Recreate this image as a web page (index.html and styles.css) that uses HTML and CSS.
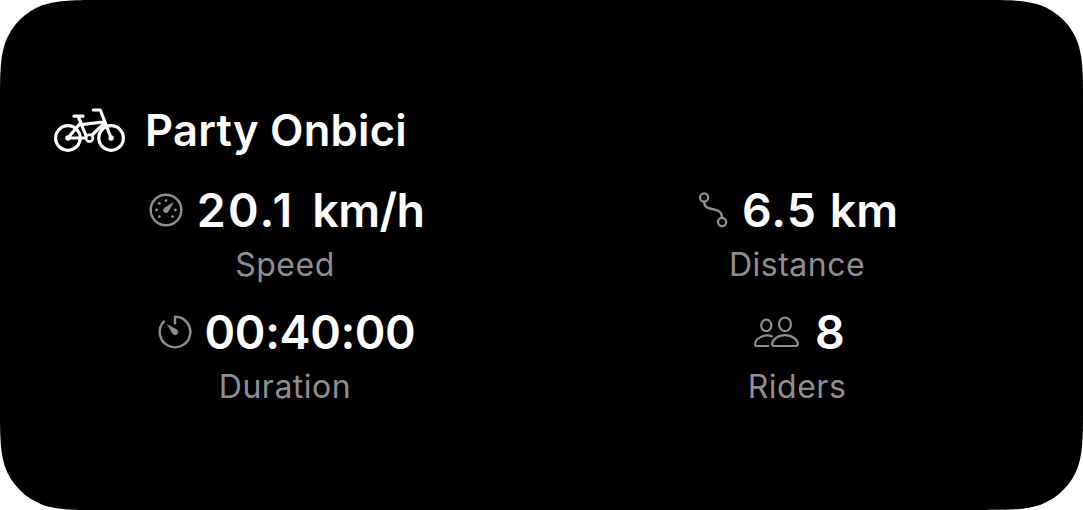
FILE: index.html
```html
<!DOCTYPE html>
<html lang="en">
<head>
  <meta charset="UTF-8" />
  <meta name="viewport" content="width=device-width, initial-scale=1" />
  <title>Party Onbici</title>
  <link rel="stylesheet" href="styles.css">
</head>
<body>

  <main class="activity-card">
    <header class="card-header">
      <svg class="bike-icon" width="74" height="52" viewBox="0 0 74 52" aria-hidden="true">
        <g fill="none" stroke="#fff" stroke-width="3.2" stroke-linecap="round" stroke-linejoin="round">
          <circle cx="14.9" cy="34" r="12.3" />
          <circle cx="58.1" cy="34" r="12.3" />
          <path d="M14.9 34H34L27.5 18.500M21 12.200H30M25.200 12.700l2.600 6L14.900 34M28.300 20.700L50 18M37 33L51.500 19M40.300 6H47.300L58.100 34" />
        </g>
        <circle cx="14.9" cy="34" r="2.7" fill="#fff" />
        <circle cx="58.1" cy="34" r="2.7" fill="#fff" />
        <circle cx="36.5" cy="34.2" r="3.4" fill="#000" stroke="#fff" stroke-width="2.6" />
      </svg>
      <h1 class="title">Party Onbici</h1>
    </header>

    <section class="stats">
      <div class="stat">
        <div class="value speed">
          <svg width="34" height="34" viewBox="0 0 34 34" aria-hidden="true">
            <circle cx="17" cy="17" r="15.3" fill="none" stroke="#8e8e93" stroke-width="2.4" />
            <path d="M24.8 9.1L19.5 18.6A2.9 2.9 0 1 1 15.4 14.7Z" fill="#8e8e93" />
            <g fill="#8e8e93">
              <circle cx="17" cy="7.7" r="1.4" />
              <circle cx="10.3" cy="10.5" r="1.4" />
              <circle cx="7.6" cy="17" r="1.4" />
              <circle cx="10.3" cy="23.7" r="1.4" />
              <circle cx="23.5" cy="23.7" r="1.4" />
              <circle cx="26.4" cy="17" r="1.4" />
            </g>
          </svg>
          <span><span class="number">20.1</span> <span class="unit">km/h</span></span>
        </div>
        <div class="label">Speed</div>
      </div>

      <div class="stat">
        <div class="value distance">
          <svg width="30" height="36" viewBox="0 0 30 36" aria-hidden="true">
            <g fill="none" stroke="#8e8e93" stroke-width="2.3">
              <circle cx="5.1" cy="5.5" r="4.1" />
              <circle cx="23.1" cy="30" r="4.1" />
              <path d="M5.1 9.8C5 15 8.5 16.1 13.2 17C19 18.1 23.1 19.4 23.1 25.7" />
            </g>
          </svg>
          <span><span class="number">6.5</span> <span class="unit">km</span></span>
        </div>
        <div class="label">Distance</div>
      </div>

      <div class="stat">
        <div class="value duration">
          <svg width="34" height="34" viewBox="0 0 34 34" aria-hidden="true">
            <path d="M17 8.4V1.7A15.3 15.3 0 1 1 5.8 6.6" fill="none" stroke="#8e8e93" stroke-width="2.4" stroke-linecap="round" stroke-linejoin="round" />
            <path d="M9.4 9.5L18.8 14.8A2.8 2.8 0 1 1 14.9 18.8Z" fill="#8e8e93" stroke="#8e8e93" stroke-width=".6" stroke-linejoin="round" />
          </svg>
          <span>00:40:00</span>
        </div>
        <div class="label">Duration</div>
      </div>

      <div class="stat">
        <div class="value riders">
          <svg width="46" height="32" viewBox="0 0 46 32" aria-hidden="true">
            <g fill="none" stroke="#8e8e93" stroke-width="2.2" stroke-linecap="round" stroke-linejoin="round">
              <ellipse cx="12.3" cy="9.4" rx="5.1" ry="5.7" />
              <ellipse cx="31" cy="8.3" rx="6" ry="6.8" />
              <path d="M31 19.2C23.5 19.2 18.1 24.3 18.1 28Q18.1 30 20.3 30H41.7Q43.9 30 43.9 28C43.9 24.3 38.5 19.2 31 19.2Z" />
              <path d="M17.8 20.3C10 17.3 1.1 22.8 1.1 28.3Q1.1 30 3 30H14.3" />
            </g>
          </svg>
          <span>8</span>
        </div>
        <div class="label">Riders</div>
      </div>
    </section>
  </main>

</body>
</html>
```

FILE: styles.css
```css
body {
  margin: 0;
  background: #fff;
  font-family: Inter, "Liberation Sans", sans-serif;
}
.activity-card {
  box-sizing: border-box;
  width: 1083px;
  height: 510px;
  padding: 100px 30px 0 29px;
  background: #000;
  color: #fff;
  /* continuous corners, a bit softer than border-radius */
  clip-path: path("M104 0H979C1009 0 1024 0 1040.1 5.1C1057.6 11.5 1071.5 25.4 1077.9 42.9C1083 59 1083 74 1083 104V406C1083 436 1083 451 1077.900 467.100C1071.500 484.600 1057.600 498.500 1040.100 504.900C1024 510 1009 510 979 510H104C74 510 59 510 42.900 504.900C25.400 498.500 11.500 484.600 5.100 467.100C0 451 0 436 0 406V104C0 74 0 59 5.100 42.900C11.500 25.400 25.400 11.500 42.900 5.100C59 0 74 0 104 0Z");
}
.card-header {
  display: flex;
  align-items: center;
  height: 60px;
  padding-left: 24px;
  gap: 18px;
}
.title {
  margin: 0;
  font-size: 43.5px;
  font-weight: 600;
  line-height: 60px;
  letter-spacing: 0.25px;
}
.stats {
  display: grid;
  grid-template-columns: 512px 512px;
  row-gap: 13px;
  margin-top: 20px;
}
.stat {
  text-align: center;
}
.value {
  display: flex;
  align-items: center;
  justify-content: center;
  gap: 14px;
  height: 60px;
  font-size: 46.5px;
  font-weight: 600;
  line-height: 60px;
}
.speed {
  padding-left: 3px;
}
.speed .number {
  letter-spacing: 2.3px;
}
.speed .unit {
  margin-left: 6px;
  letter-spacing: -0.6px;
}
.distance {
  gap: 13px;
  padding-left: 3px;
}
.distance .number {
  letter-spacing: 1px;
}
.distance .unit {
  margin-left: 1px;
}
.duration {
  gap: 13px;
  padding-left: 3px;
  letter-spacing: -0.4px;
}
.riders {
  gap: 15px;
  padding-left: 5px;
}
.label {
  color: #8e8e93;
  font-size: 32px;
  line-height: 49px;
  letter-spacing: 0.5px;
}
```
